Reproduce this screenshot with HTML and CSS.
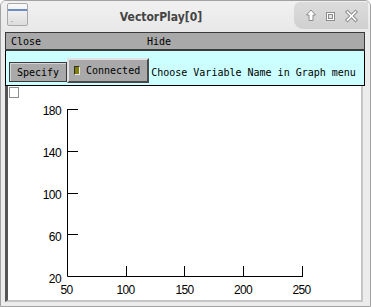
FILE: index.html
```html
<!DOCTYPE html>
<html lang="en">
<head>
  <meta charset="UTF-8">
  <title>VectorPlay[0]</title>
  <link rel="stylesheet" href="styles.css">
</head>
<body>
  <div class="window">
    <div class="titlebar">
      <svg class="win-icon" width="21" height="24" viewBox="0 0 21 24">
        <defs>
          <linearGradient id="iconFill" x1="0" y1="0" x2="0" y2="1">
            <stop offset="0" stop-color="#fafafa"/>
            <stop offset="1" stop-color="#dcdcdc"/>
          </linearGradient>
        </defs>
        <rect x="0.5" y="0.5" width="20" height="22" rx="1.5" fill="url(#iconFill)" stroke="#a8a8a8"/>
        <rect x="1" y="6" width="19" height="2" fill="#6d8cc4"/>
        <rect x="4" y="18" width="2" height="1" fill="#b0b0b0"/>
      </svg>
      <div class="title">VectorPlay[0]</div>
      <div class="win-buttons">
        <svg width="74" height="27" viewBox="0 0 74 27">
          <!-- shade -->
          <polygon points="17,8 12.5,13 15,13 15,18.5 19,18.5 19,13 21.5,13" fill="#fff" stroke="#8c8c8c" stroke-width="1" stroke-linejoin="round"/>
          <!-- maximize -->
          <rect x="32.5" y="10.5" width="8" height="8" fill="#fff" stroke="#8c8c8c"/>
          <rect x="34.5" y="12.5" width="4" height="4" fill="#e4e4e4" stroke="#8c8c8c"/>
          <!-- close -->
          <path d="M53.5 10 L61.5 18 M61.5 10 L53.5 18" stroke="#8c8c8c" stroke-width="3.6" stroke-linecap="square"/>
          <path d="M53.5 10 L61.5 18 M61.5 10 L53.5 18" stroke="#fff" stroke-width="1.6" stroke-linecap="square"/>
        </svg>
      </div>
    </div>

    <div class="client">
      <div class="menubar">
        <span class="menu-item">Close</span>
        <span class="menu-item">Hide</span>
      </div>

      <div class="toolbar">
        <button class="btn btn-specify">Specify</button>
        <button class="btn btn-connected"><span class="led"></span>Connected</button>
        <span class="status">Choose Variable Name in Graph menu</span>
      </div>

      <div class="plot">
        <span class="checkbox"></span>
        <svg class="graph" width="353" height="214" viewBox="8 86 353 214">
          <g stroke="#000" stroke-width="1" fill="none">
            <!-- axes -->
            <path d="M67.5 109 V276.5 H303"/>
            <!-- y ticks -->
            <path d="M67.5 109.5 H78 M67.5 151.5 H78 M67.5 193.5 H78 M67.5 234.5 H78"/>
            <!-- x ticks -->
            <path d="M126.5 266 V276 M184.5 266 V276 M243.5 266 V276 M302.5 266 V276"/>
          </g>
          <g class="axis-label" text-anchor="end">
            <text x="61" y="115">180</text>
            <text x="61" y="157">140</text>
            <text x="61" y="199">100</text>
            <text x="61" y="241">60</text>
            <text x="61" y="283">20</text>
          </g>
          <g class="axis-label" text-anchor="middle">
            <text x="66.5" y="294">50</text>
            <text x="125.5" y="294">100</text>
            <text x="184.5" y="294">150</text>
            <text x="243" y="294">200</text>
            <text x="301.5" y="294">250</text>
          </g>
        </svg>
      </div>
    </div>
  </div>
</body>
</html>
```

FILE: styles.css
```css
* {
  margin: 0;
  padding: 0;
  box-sizing: border-box;
}

body {
  margin: 0;
  background: #ffffff;
  font-family: "DejaVu Sans Mono", monospace;
}

.window {
  width: 371px;
  height: 307px;
  background: #ececec;
  border: 1px solid #a2a2a2;
  border-radius: 6px 6px 0 0;
  display: flex;
  flex-direction: column;
}

/* title bar */
.titlebar {
  height: 31px;
  display: flex;
  align-items: flex-start;
  background: linear-gradient(#f1f1f1, #e8e8e8);
  border-radius: 5px 5px 0 0;
}

.win-icon {
  display: block;
  margin: 2px 0 0 6px;
}

.title {
  flex: 1;
  text-align: center;
  font-family: "DejaVu Sans Condensed", "DejaVu Sans", sans-serif;
  font-weight: bold;
  font-size: 12px;
  line-height: 29px;
  padding-top: 2px;
  color: #444444;
}

.win-buttons {
  margin: 1px 2px 0 0;
  width: 74px;
  height: 27px;
  background: linear-gradient(#dcdcdc, #d0d0d0);
  border-radius: 6px 0 0 9px;
}

.win-buttons svg {
  display: block;
}

/* client area */
.client {
  margin: 0 5px 0 4px;
  width: 360px;
}

.menubar {
  height: 19px;
  background: #a9a9a9;
  border: 1px solid #3a3a3a;
  border-bottom-width: 2px;
  display: flex;
  font-size: 10px;
  color: #000;
}

.menu-item {
  width: 136px;
  padding: 2px 0 0 5px;
  line-height: 14px;
}

.toolbar {
  height: 35px;
  background: #ccffff;
  border: 1px solid #000;
  border-top: none;
  display: flex;
  align-items: flex-end;
  padding: 0 0 2px 3px;
}

.btn {
  font-family: "DejaVu Sans Mono", monospace;
  font-size: 10px;
  color: #000;
  background: #a9a9a9;
  cursor: pointer;
}

.btn-specify {
  width: 58px;
  height: 20px;
  margin-bottom: 1px;
  border: 1px solid #3a3a3a;
  box-shadow: inset 1px 1px 0 #d6d6d6;
}

.btn-connected {
  height: 25px;
  display: flex;
  align-items: center;
  padding: 0 7px 0 5px;
  border: 2px solid;
  border-color: #e2e2e2 #4a4a4a #4a4a4a #e2e2e2;
}

.led {
  width: 6px;
  height: 9px;
  margin-right: 6px;
  background: #808000;
  border: 1px solid;
  border-color: #2e2e2e #e8e8e8 #e8e8e8 #2e2e2e;
}

.status {
  margin: 0 0 3px 2px;
  font-size: 10px;
  line-height: 14px;
  white-space: nowrap;
}

/* plot */
.plot {
  position: relative;
  width: 358px;
  height: 216px;
  background: #ffffff;
  border-left: 3px solid #555555;
  border-right: 2px solid #c6c6c6;
  border-bottom: 2px solid #c6c6c6;
}

.checkbox {
  position: absolute;
  left: 1px;
  top: 1px;
  width: 10px;
  height: 11px;
  background: #fff;
  border: 1px solid #8e8e8e;
}

.graph {
  display: block;
}

.axis-label text {
  font-family: "Liberation Sans", Arial, sans-serif;
  font-size: 12px;
  letter-spacing: -0.6px;
  fill: #000;
}
```
